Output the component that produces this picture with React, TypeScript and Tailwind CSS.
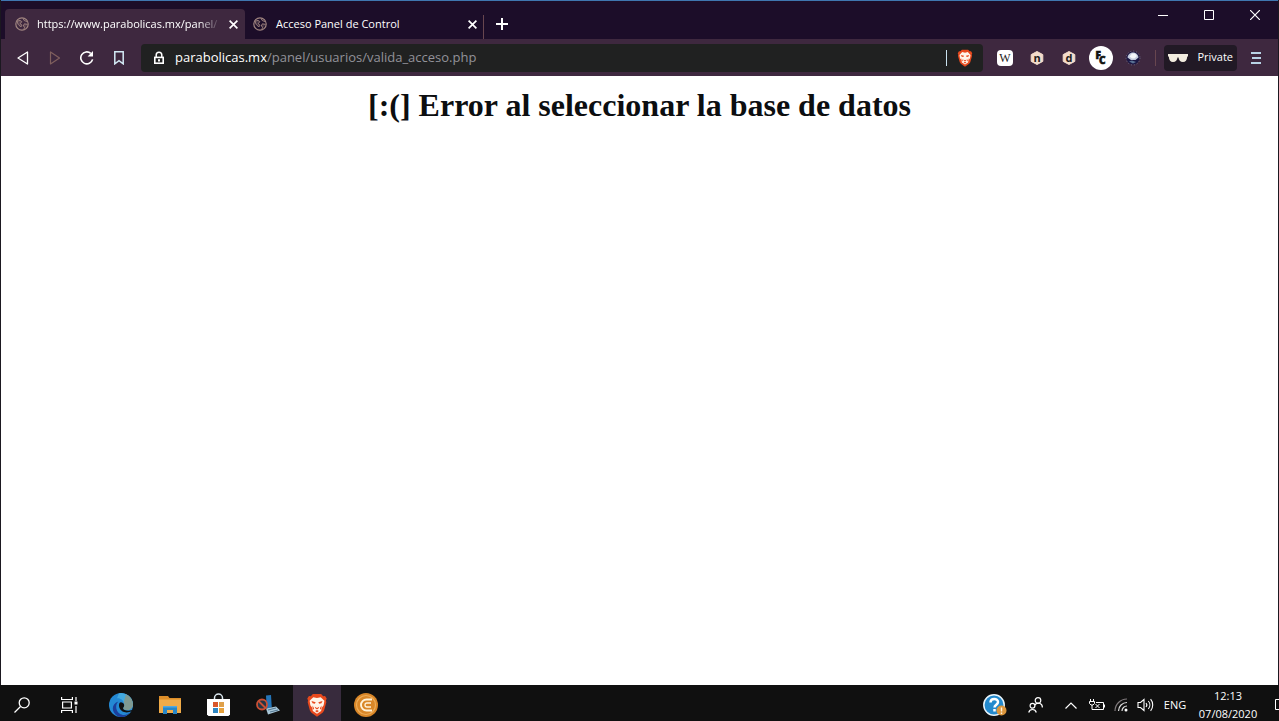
import type { ReactNode } from "react";

const ui = "font-['Open_Sans','Noto_Sans',sans-serif]";

function GlobeIcon() {
  return (
    <svg width="14" height="14" viewBox="0 0 14 14" fill="none" stroke="#a08580" className="shrink-0">
      <circle cx="7" cy="7" r="6.2" strokeWidth="1.2" />
      <path d="M2 4.2 5 3.4l1.8 1.2L5.2 6.8 7 8.2 5.8 10 3 7.2zM8 1.5l1.2 2L12 4.6M12.5 7.4 9.4 6.8 8.2 9l1.6 1.2-1.2 2.4" fill="#a08580" fillOpacity=".3" strokeWidth=".9" />
    </svg>
  );
}

function BraveIcon({ className }: { className: string }) {
  return (
    <svg viewBox="0 0 22 26" className={className}>
      <path d="M6.5 1h9l2.2 2.4 2-.2L21.500 6l-.8 2 .4 2-2.500 9.200-1.600 2.200-6 4.200-6-4.200-1.600-2.200L.9 10l.4-2-.8-2 1.800-2.800 2 .2z" fill="#e8491d" />
      <path d="M7 4.500 11 5.300 15 4.500 19 8.500 18.200 13.200 16 16.200 15.500 19.500 11 22.500 6.500 19.500 6 16.200 3.800 13.200 3 8.500z" fill="#fff4e8" />
      <path d="m5 8.800 4.600 1.100-1 1.800-2.400-.6zM17 8.800l-4.600 1.100 1 1.800 2.400-.6zM8.600 15l2.400 1.300 2.400-1.300-.6 1.600-1.800 1.300-1.800-1.300zM6.200 13.500l1.600 3-.4 1.600-1.200-1.800zM15.800 13.500l-1.600 3 .4 1.600 1.200-1.800zM9 19.500l2-1 2 1-2 1.500z" fill="#e8491d" />
    </svg>
  );
}

function CloseIcon() {
  return (
    <svg width="9" height="9" viewBox="0 0 9 9" stroke="#fff" strokeWidth="1.7" className="shrink-0">
      <path d="m.6.6 7.800 7.800M8.400.6.6 8.400" />
    </svg>
  );
}

function IconButton({ label, className, children }: { label: string; className: string; children: ReactNode }) {
  return (
    <button aria-label={label} className={`flex shrink-0 items-center justify-center ${className}`}>
      {children}
    </button>
  );
}

function HexBadge({ letter }: { letter: string }) {
  return (
    <svg width="14" height="14" viewBox="0 0 14 14">
      <path d="M7 .5 12.800 3.600v6.800L7 13.500 1.200 10.400V3.600z" fill="#f3dccb" stroke="#f3dccb" strokeLinejoin="round" />
      <text x="7" y="10.6" textAnchor="middle" fontFamily="Open Sans, sans-serif" fontSize="11" fontWeight="700" fill="#201a1a">
        {letter}
      </text>
    </svg>
  );
}

function TabStrip() {
  return (
    <div className="flex h-[39px] border-t border-[#3f76b0] bg-[#1c0d29] pl-1">
      <div className="mt-2 flex w-60 items-center rounded-t bg-[#3e283f] pl-[10px] pr-2">
        <GlobeIcon />
        <span className="ml-2 flex-1 whitespace-nowrap text-[11px] text-white [mask-image:linear-gradient(to_right,black_88%,transparent)]">
          https://www.parabolicas.mx/panel/
        </span>
        <IconButton label="Close tab" className="ml-2 h-4 w-2">
          <CloseIcon />
        </IconButton>
      </div>
      <div className="mt-2 flex w-[238px] items-center pl-2 pr-[5px]">
        <GlobeIcon />
        <span className="ml-[9px] flex-1 whitespace-nowrap text-[11px] text-white">Acceso Panel de Control</span>
        <IconButton label="Close tab" className="h-4 w-3">
          <CloseIcon />
        </IconButton>
      </div>
      <div className="mt-[14px] h-6 w-px bg-[#68464f]" />
      <IconButton label="New tab" className="mt-2 h-[30px] w-9">
        <svg width="12" height="12" viewBox="0 0 12 12" stroke="#fff" strokeWidth="2">
          <path d="M6 0v12M0 6h12" />
        </svg>
      </IconButton>
      <div className="ml-auto flex h-7 text-white">
        <IconButton label="Minimize" className="w-[46px]">
          <svg width="10" height="10" viewBox="0 0 10 10" stroke="currentColor"><path d="M0 5.5h10" /></svg>
        </IconButton>
        <IconButton label="Maximize" className="w-[46px]">
          <svg width="10" height="10" viewBox="0 0 10 10" stroke="currentColor" fill="none"><path d="M.5.5h9v9h-9z" /></svg>
        </IconButton>
        <IconButton label="Close" className="w-[46px]">
          <svg width="10" height="10" viewBox="0 0 10 10" stroke="currentColor" strokeWidth="1.2"><path d="m0 0 10 10M10 0 0 10" /></svg>
        </IconButton>
      </div>
    </div>
  );
}

function Toolbar() {
  return (
    <div className="flex h-[37px] items-center bg-[#3e283f] pl-[6px] pr-[6px]">
      <IconButton label="Back" className="h-8 w-8">
        <svg width="12" height="14" viewBox="0 0 12 14" fill="none" stroke="#fff" strokeWidth="1.3" strokeLinejoin="round"><path d="M10.5 1v12L1 7z" /></svg>
      </IconButton>
      <IconButton label="Forward" className="h-8 w-8">
        <svg width="12" height="14" viewBox="0 0 12 14" fill="none" stroke="#80605e" strokeWidth="1.2" strokeLinejoin="round"><path d="M1.5 1v12L10.5 7z" /></svg>
      </IconButton>
      <IconButton label="Reload" className="h-8 w-8">
        <svg width="14" height="14" viewBox="0 0 14 14" fill="none" stroke="#fff" strokeWidth="1.6">
          <path d="M12.6 8.4A6 6 0 1 1 10.8 2.4" />
          <path d="M13 0v5.6H7.6z" fill="#fff" stroke="none" />
        </svg>
      </IconButton>
      <IconButton label="Bookmark" className="h-8 w-8">
        <svg width="10" height="14" viewBox="0 0 10 14" fill="none" stroke="#d3eaf5" strokeWidth="1.5"><path d="M.8.8h8.4v12L5 9.6.8 12.8z" /></svg>
      </IconButton>

      <div className="ml-[6px] flex h-7 flex-1 items-center rounded bg-[#202121] pl-3 pr-2">
        <svg width="12" height="14" viewBox="0 0 12 14" className="shrink-0">
          <path d="M3.2 6V4a2.8 2.8 0 0 1 5.6 0v2" fill="none" stroke="#fff" strokeWidth="1.5" />
          <path d="M1 5.6h10V13H1z" fill="#fff" />
          <path d="M2.6 7.2h6.8v4.2H2.6z" fill="#202121" />
          <path d="M5 8.2h2v2.2H5z" fill="#fff" />
        </svg>
        <div className="ml-[10px] flex-1 whitespace-nowrap text-[13px] text-[#929299]">
          <span className="text-white">parabolicas.mx</span>/panel/usuarios/valida_acceso.php
        </div>
        <div className="mr-2 h-4 w-px bg-[#c9e1ee]" />
        <IconButton label="Brave Shields" className="h-6 w-5">
          <BraveIcon className="h-[18px] w-4" />
        </IconButton>
      </div>

      <IconButton label="Wikipedia" className="ml-[6px] h-8 w-8">
        <span className="flex h-4 w-4 items-center justify-center rounded-sm bg-white font-['Liberation_Serif',serif] text-xs text-[#222]">W</span>
      </IconButton>
      <IconButton label="Extension n" className="h-8 w-8">
        <HexBadge letter="n" />
      </IconButton>
      <IconButton label="Extension d" className="h-8 w-8">
        <HexBadge letter="d" />
      </IconButton>
      <IconButton label="Extension FC" className="h-8 w-8">
        <svg width="24" height="24" viewBox="0 0 24 24">
          <circle cx="12" cy="12" r="12" fill="#fff" />
          <g fontFamily="Open Sans, sans-serif" fontSize="10" fontWeight="800" fill="#111" stroke="#111" strokeWidth=".6">
            <text x="6.5" y="13">F</text>
            <text x="10" y="18">C</text>
          </g>
        </svg>
      </IconButton>
      <IconButton label="Globe extension" className="h-8 w-8">
        <svg width="16" height="16" viewBox="0 0 16 16">
          <circle cx="8" cy="8" r="6.500" fill="#1a1744" />
          <circle cx="8" cy="8" r="7" fill="none" stroke="#6a6788" strokeDasharray="1 2" />
          <path d="M2.500 7.500C3 4 5.500 2.500 8 2.500s5 1.500 5.500 5L10.500 10H6z" fill="#c3cbdc" />
          <path d="M4.500 6.500 7 3.500h3L12 6 9.500 8.500H7z" fill="#f4f7fa" />
          <path d="m4 11.500 3-1 4 1.500-3 1.600z" fill="#5a7294" />
        </svg>
      </IconButton>
      <div className="ml-[6px] h-4 w-px bg-[#68464f]" />
      <button className="ml-2 flex h-[26px] w-[73px] shrink-0 items-center justify-between rounded bg-[#211925] pl-1 pr-1 text-[11px] text-white">
        <svg width="20" height="8" viewBox="0 0 20 8" fill="#f2ecdf">
          <path d="M0 0h20v2.200l-.8.500C19 6.200 17.500 8 15 8c-2.800 0-4.200-1.900-4.500-4.500h-1C9.200 6.100 7.800 8 5 8 2.500 8 1 6.200.8 2.700L0 2.200z" />
        </svg>
        Private
      </button>
      <IconButton label="Menu" className="ml-[3px] h-8 w-8">
        <svg width="10" height="12" viewBox="0 0 10 12" stroke="#b9d3e6" strokeWidth="2"><path d="M0 1h10M1 6h9M0 11h10" /></svg>
      </IconButton>
    </div>
  );
}

function TaskbarApps() {
  return (
    <div className="flex h-full items-center">
      <IconButton label="Search" className="h-full w-[44px]">
        <svg width="16" height="16" viewBox="0 0 16 16" fill="none" stroke="#fff" strokeWidth="1.3"><circle cx="10.2" cy="5.8" r="5" /><path d="M6.5 9.5.5 15.5" /></svg>
      </IconButton>
      <IconButton label="Task View" className="ml-px h-full w-[49px]">
        <svg width="17" height="16" viewBox="0 0 17 16" fill="none" stroke="#fff" strokeWidth="1.2">
          <path d="M.6 0v2.5h10.8V0M.6 16v-2.5h10.8V16M1.6 5h8.8v6H1.6zM15 0v4M15 9v7" />
          <path d="M13.5 4.5h3v3h-3z" fill="#fff" stroke="none" />
        </svg>
      </IconButton>
      <IconButton label="Edge" className="ml-[2px] h-full w-[49px]">
        <svg width="24" height="24" viewBox="0 0 24 24">
          <circle cx="12" cy="12" r="12" fill="#2489d4" />
          <path d="M10 .2A12 12 0 0 1 24 11c0 4-2.500 6-6 6-2.600 0-4.200-1-3.800-2 .8-1 1.300-2 1.100-3.400C15 7.500 12 5 8 5.200z" fill="#43a9df" />
          <path d="M17 1.200A12 12 0 0 1 24 11c0 4-2.500 6-6 6-2.600 0-4.200-1-3.800-2 1.400-1.800 1.500-3.800.4-5.800z" fill="#7f9a92" />
          <path d="M9.500 8.500C6.500 11 6 17 10.500 20.500c3.600 2.700 8.500 1.500 11.500-2A12 12 0 0 1 9 23.600C1.500 19 2.500 10.500 9.500 8.500z" fill="#1b3f9c" />
          <path d="M10.500 10c-1.500 3.500.5 7.800 4.500 9 2.900.9 5.500.2 7.500-.8.500-.3.700-.8.300-1.200-2.800 1.300-8.800.9-8.800-2 .9-1 1.300-2 1.100-3.200-.3-2-3.500-3.500-4.600-1.800z" fill="#111" />
        </svg>
      </IconButton>
      <IconButton label="File Explorer" className="h-full w-[49px]">
        <svg width="22" height="18" viewBox="0 0 22 18">
          <path d="M0 0h9l1.5 2H22v15H0z" fill="#dc8d29" />
          <path d="M0 3.500h22V17H0z" fill="#f0ab48" />
          <path d="M4 10h14v8h-4v-4H8v4H4z" fill="#2787c8" />
          <path d="M4 10h14v1.500H4z" fill="#52a8df" />
        </svg>
      </IconButton>
      <IconButton label="Microsoft Store" className="h-full w-[49px]">
        <svg width="23" height="24" viewBox="0 0 23 24">
          <path d="M7.500 7V5a4 4 0 0 1 8 0v2" fill="none" stroke="#dce9f1" strokeWidth="1.5" />
          <path d="M0 6h23v15.500L21.500 23h-20L0 21.500z" fill="#fff" />
          <path d="M6 9h5v5H6z" fill="#d9572b" /><path d="M12 9h5v5h-5z" fill="#dfa04a" />
          <path d="M6 15h5v5H6z" fill="#2f86c2" /><path d="M12 15h5v5h-5z" fill="#e6a13c" />
        </svg>
      </IconButton>
      <IconButton label="Network tool" className="h-full w-[49px]">
        <svg width="24" height="20" viewBox="0 0 24 20">
          <path d="m10 .5 5-.5.8 12.500-5 .8z" fill="#2475b8" />
          <path d="m10 13.500 10-2 4 4-12 4z" fill="#a9c7d8" />
          <path d="m12 15 8-2M14 17l8-2" stroke="#3a607c" strokeWidth=".8" />
          <circle cx="6" cy="9.500" r="5" fill="#233543" stroke="#c94f34" strokeWidth="1.800" />
          <path d="m2.500 6 7 7" stroke="#c94f34" strokeWidth="1.800" />
        </svg>
      </IconButton>
      <IconButton label="Brave" className="ml-px h-full w-12 bg-[#382b3d]">
        <BraveIcon className="h-6 w-[22px]" />
      </IconButton>
      <IconButton label="Cryptotab" className="h-full w-[49px]">
        <svg width="24" height="24" viewBox="0 0 24 24" fill="none">
          <circle cx="12" cy="12" r="12" fill="#d98728" />
          <circle cx="12" cy="12" r="9.500" stroke="#eead58" strokeWidth="1.2" />
          <path d="M18 6.500h-5.500a5.500 5.500 0 0 0 0 11H18" stroke="#fff3da" strokeWidth="1.900" />
          <path d="M17 10h-4a2 2 0 0 0 0 4h4" stroke="#fff3da" strokeWidth="1.300" />
        </svg>
      </IconButton>
    </div>
  );
}

function TaskbarTray() {
  return (
    <div className="flex h-full items-center text-white">
      <IconButton label="Help" className="h-full w-8">
        <svg width="24" height="22" viewBox="0 0 24 22">
          <circle cx="11" cy="11" r="10.2" fill="#2389cd" stroke="#e9f5fc" strokeWidth="1.5" />
          <path d="M7.500 8.500c0-4.500 7.500-4.500 7.500-.5 0 2.700-3.500 2.600-3.500 5.500M11.500 15v2.500" fill="none" stroke="#fff" strokeWidth="2.500" />
          <circle cx="18.500" cy="16.500" r="5" fill="#dc963c" />
          <path d="M18.500 13.500v4M18.500 18.500V20" stroke="#fff2dc" strokeWidth="1.400" />
        </svg>
      </IconButton>
      <IconButton label="People" className="ml-1 h-full w-10">
        <svg width="15" height="16" viewBox="0 0 15 16" fill="none" stroke="currentColor" strokeWidth="1.2">
          <circle cx="10" cy="3.500" r="2.800" /><path d="M6.800 8.200a4 4 0 0 1 7.500 2.300" />
          <circle cx="4.500" cy="8.800" r="2.400" /><path d="M.7 15.500a3.900 3.900 0 0 1 7.600 0" />
        </svg>
      </IconButton>
      <IconButton label="Show hidden icons" className="ml-[2px] h-full w-7">
        <svg width="12" height="7" viewBox="0 0 12 7" fill="none" stroke="currentColor" strokeWidth="1.2"><path d="m.5 6.500 5.500-5.500 5.500 5.500" /></svg>
      </IconButton>
      <IconButton label="Battery" className="h-full w-6">
        <svg width="16" height="12" viewBox="0 0 16 12" fill="none" stroke="currentColor">
          <path d="M1.500 0v2M4.500 0v2M.5 2.500h5v2L4 6H2L.5 4.500zM3 6v4.500h11.500v-7H7M15.500 5.500v3M6.500 5l4 4M10.500 5l-4 4" />
        </svg>
      </IconButton>
      <IconButton label="Wi-Fi" className="h-full w-6">
        <svg width="14" height="14" viewBox="0 0 14 14" fill="none" stroke="#817b7d" strokeWidth="1.2">
          <path d="M1 13A12 12 0 0 1 13 1" /><path d="M4.500 13A8.500 8.500 0 0 1 13 4.500M8 13a5 5 0 0 1 5-5" stroke="#dedede" />
          <circle cx="12" cy="12" r="1.500" fill="#fff" stroke="none" />
        </svg>
      </IconButton>
      <IconButton label="Volume" className="h-full w-6">
        <svg width="17" height="14" viewBox="0 0 17 14" fill="none" stroke="currentColor" strokeWidth="1.1">
          <path d="M1 4.500h2.500L7 1.500v11L3.500 9.500H1zM9 5a3 3 0 0 1 0 4M11.300 3a6 6 0 0 1 0 8M13.600 1.200a9 9 0 0 1 0 11.600" />
        </svg>
      </IconButton>
      <button className="h-full w-9 text-center text-[11px]">ENG</button>
      <button className="h-full w-[70px] text-center text-[11px] leading-[18px]">
        <time className="block">12:13</time>
        <time className="block">07/08/2020</time>
      </button>
      <IconButton label="Notifications" className="ml-3 h-full w-1">
        <svg width="4" height="14" viewBox="0 0 4 14" fill="none" stroke="currentColor"><path d="M4 1.500H.5v10H4" /></svg>
      </IconButton>
    </div>
  );
}

export default function App() {
  return (
    <div className={`flex h-screen flex-col overflow-hidden bg-white ${ui}`}>
      <div className="flex min-h-0 flex-1 flex-col border-x border-[#1b1820]">
        <header>
          <TabStrip />
          <Toolbar />
        </header>
        <main className="flex-1 bg-white pt-3">
          <h1 className="text-center font-['Liberation_Serif',serif] text-[32px] font-bold leading-[34px] text-[#0c0e10]">
            [:(] Error al seleccionar la base de datos
          </h1>
        </main>
      </div>
      {/* taskbar runs slightly past the bottom edge of the screen */}
      <footer className="-mb-1 flex h-10 shrink-0 justify-between bg-[#101010]">
        <TaskbarApps />
        <TaskbarTray />
      </footer>
    </div>
  );
}
